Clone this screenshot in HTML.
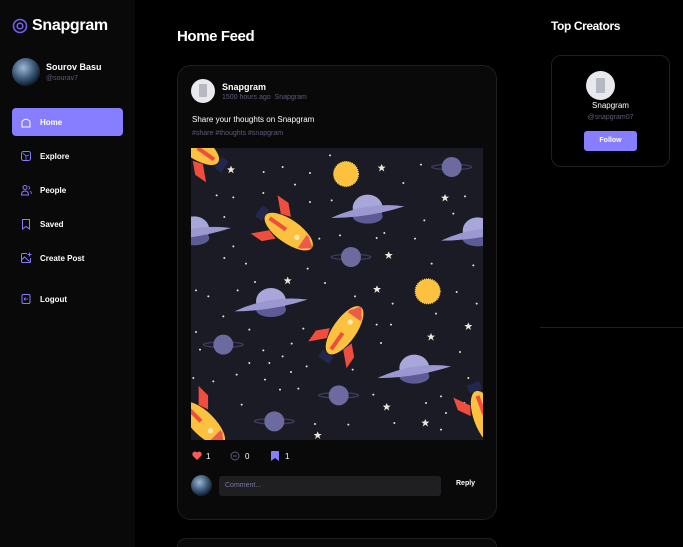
<!DOCTYPE html>
<html style="height:547px;overflow:hidden"><head><meta charset="utf-8"><style>
*{margin:0;padding:0;box-sizing:border-box}
body{width:683px;height:547px;background:#000;font-family:"Liberation Sans",sans-serif;color:#fff;position:relative;overflow:hidden}
.side{position:absolute;left:0;top:0;width:135px;height:547px;background:#09090a}
.logo{position:absolute;left:12px;top:17px;display:flex;align-items:center;gap:4px;font-size:16px;font-weight:bold}
.av{border-radius:50%;background:radial-gradient(circle at 40% 35%,#9fb7d3,#3c5878 45%,#0d1a2c 75%)}
.nav{position:absolute;left:12px;width:111px;height:28px;display:flex;align-items:center;font-size:8px;font-weight:bold;padding-left:28px}
.nav svg{position:absolute;left:8px;top:8px}
.card{position:absolute;left:177px;top:65px;width:320px;height:455px;background:#09090a;border:1px solid #1f1f22;border-radius:14px}
.rc{position:absolute;left:551px;top:55px;width:119px;height:112px;border:1px solid #1f1f22;border-radius:10px;background:#000}
</style></head><body>
<div class="side">
 <div class="logo"><svg width="16" height="16" viewBox="0 0 16 16"><circle cx="8" cy="8" r="6.5" fill="none" stroke="#6c63e8" stroke-width="1.6"/><circle cx="8" cy="8" r="2.8" fill="none" stroke="#6c63e8" stroke-width="1.6"/></svg><span style="letter-spacing:-.3px">Snapgram</span></div>
 <div class="av" style="position:absolute;left:12px;top:58px;width:28px;height:28px"></div>
 <div style="position:absolute;left:46px;top:62px;font-size:9px;font-weight:bold">Sourov Basu</div>
 <div style="position:absolute;left:46px;top:75px;font-size:7px;color:#5c5c7b">@sourav7</div>
 <div class="nav" style="top:108px;background:#877eff;border-radius:4px"><svg width="12" height="12" viewBox="0 0 12 12"><path d="M2 11V5.5Q6 1 10 5.5V11Z" fill="none" stroke="#fff" stroke-width="1"/></svg>Home</div>
 <div class="nav" style="top:142px"><svg width="12" height="12" viewBox="0 0 12 12"><rect x="1.5" y="1.5" width="9" height="9" rx="2" fill="none" stroke="#877eff"/><path d="M3 3l3 3l3-1M6 6v4" stroke="#877eff" fill="none" stroke-width=".8"/></svg>Explore</div>
 <div class="nav" style="top:176px"><svg width="12" height="12" viewBox="0 0 12 12"><circle cx="5" cy="3.5" r="2" fill="none" stroke="#877eff"/><path d="M1.5 11q0-4 3.5-4t3.5 4z" fill="none" stroke="#877eff"/><path d="M8.5 2a2 2 0 0 1 0 3.5M10 7q1.5 1 1.3 3" fill="none" stroke="#877eff" stroke-width=".8"/></svg>People</div>
 <div class="nav" style="top:210px"><svg width="12" height="12" viewBox="0 0 12 12"><path d="M2.5 1.5h7v9.5L6 8.5 2.5 11z" fill="none" stroke="#877eff"/></svg>Saved</div>
 <div class="nav" style="top:244px"><svg width="12" height="12" viewBox="0 0 12 12"><path d="M7 1.5H2.5a1 1 0 0 0-1 1v7a1 1 0 0 0 1 1h7a1 1 0 0 0 1-1V6M1.5 8l3-3 5 4.5" fill="none" stroke="#877eff"/><path d="M9.5 0.5v4M7.5 2.5h4" stroke="#877eff"/></svg>Create Post</div>
 <div class="nav" style="top:285px"><svg width="12" height="12" viewBox="0 0 12 12"><rect x="2" y="1.5" width="8" height="9" rx="1.5" fill="none" stroke="#877eff"/><path d="M4 6h4M4 6l1.5-1.5M4 6l1.5 1.5" stroke="#877eff" fill="none" stroke-width=".8"/></svg>Logout</div>
</div>

<div style="position:absolute;left:177px;top:28px;font-size:15px;font-weight:bold;letter-spacing:-.4px">Home Feed</div>
<div class="card">
 <div style="position:absolute;left:13px;top:13px;width:24px;height:24px;border-radius:50%;background:#e8e9ec"><div style="position:absolute;left:8px;top:5px;width:8px;height:13px;background:#b6b9c3;border-radius:1px"></div></div>
 <div style="position:absolute;left:44px;top:16px;font-size:9px;font-weight:bold">Snapgram</div>
 <div style="position:absolute;left:44px;top:28px;font-size:7px;color:#5c5c7b">1500 hours ago &nbsp;Snapgram</div>
 <div style="position:absolute;left:14px;top:49px;font-size:8px">Share your thoughts on Snapgram</div>
 <div style="position:absolute;left:14px;top:64px;font-size:7px;color:#5c5c7b">#share #thoughts #snapgram</div>
 <svg style="position:absolute;left:13px;top:82px" width="292" height="292" viewBox="0 0 876 876">
  <defs>
   <g id="u"><ellipse cx="0" cy="-10" rx="45" ry="40" fill="#a9a6d9"/><ellipse cx="0" cy="15" rx="45" ry="22" fill="#5d5a96"/><path d="M-110 20Q0 -30 110-15Q0 20-110 20z" fill="#9b98d1"/></g>
   <g id="p"><ellipse cx="0" cy="0" rx="60" ry="8" fill="none" stroke="#3d3c5e" stroke-width="4"/><circle r="30" fill="#6c6a9e"/></g>
   <g id="r"><path d="M-40-30l-40-40h40l30 30zM-40 30l-40 40h40l30-30z" fill="#ef4d3d"/><ellipse cx="10" cy="0" rx="85" ry="35" fill="#fcc13e"/><path d="M65-25Q100 0 65 25Q80 0 65-25z" fill="#ee5a4a"/><path d="M60-24Q95-5 95 0Q95 5 60 24z" fill="#ee5a4a"/><rect x="-60" y="-6" width="60" height="12" fill="#ef4d3d"/><circle cx="40" cy="0" r="8" fill="#fde6b0"/><rect x="-100" y="-20" width="25" height="40" fill="#23264d"/></g>
   <g id="s"><circle r="37" fill="#fcc13e" stroke="#ffd95a" stroke-width="4" stroke-dasharray="3 3"/></g>
   <path id="st" d="M0-12L3.5-4 12-4 5 2 8 11 0 5-8 11-5 2-12-4-3.5-4z" fill="#ece7d8"/>
  </defs>
  <rect width="876" height="876" fill="#1a1b24"/>
  <g fill="#e8e3d0">
   <circle cx="218" cy="72" r="3"/><circle cx="275" cy="57" r="3"/><circle cx="357" cy="75" r="3"/><circle cx="312" cy="110" r="3"/><circle cx="417" cy="22" r="3"/><circle cx="77" cy="142" r="3"/><circle cx="127" cy="148" r="3"/><circle cx="217" cy="135" r="3"/><circle cx="357" cy="162" r="3"/><circle cx="422" cy="157" r="3"/><circle cx="637" cy="105" r="3"/><circle cx="690" cy="50" r="3"/><circle cx="822" cy="145" r="3"/><circle cx="787" cy="197" r="3"/><circle cx="700" cy="217" r="3"/><circle cx="100" cy="207" r="3"/><circle cx="127" cy="295" r="3"/><circle cx="100" cy="330" r="3"/><circle cx="165" cy="347" r="3"/><circle cx="385" cy="272" r="3"/><circle cx="447" cy="262" r="3"/><circle cx="557" cy="270" r="3"/><circle cx="580" cy="255" r="3"/><circle cx="672" cy="272" r="3"/><circle cx="722" cy="347" r="3"/><circle cx="847" cy="352" r="3"/><circle cx="350" cy="362" r="3"/><circle cx="192" cy="402" r="3"/><circle cx="402" cy="405" r="3"/><circle cx="15" cy="427" r="3"/><circle cx="52" cy="445" r="3"/><circle cx="140" cy="427" r="3"/><circle cx="492" cy="445" r="3"/><circle cx="605" cy="467" r="3"/><circle cx="797" cy="432" r="3"/><circle cx="857" cy="467" r="3"/><circle cx="735" cy="497" r="3"/><circle cx="97" cy="505" r="3"/><circle cx="15" cy="552" r="3"/><circle cx="175" cy="545" r="3"/><circle cx="337" cy="542" r="3"/><circle cx="557" cy="530" r="3"/><circle cx="600" cy="530" r="3"/><circle cx="570" cy="585" r="3"/><circle cx="302" cy="587" r="3"/><circle cx="27" cy="605" r="3"/><circle cx="217" cy="607" r="3"/><circle cx="275" cy="625" r="3"/><circle cx="235" cy="645" r="3"/><circle cx="347" cy="655" r="3"/><circle cx="175" cy="645" r="3"/><circle cx="137" cy="680" r="3"/><circle cx="222" cy="695" r="3"/><circle cx="300" cy="672" r="3"/><circle cx="485" cy="665" r="3"/><circle cx="807" cy="612" r="3"/><circle cx="832" cy="690" r="3"/><circle cx="7" cy="690" r="3"/><circle cx="67" cy="700" r="3"/><circle cx="267" cy="725" r="3"/><circle cx="322" cy="722" r="3"/><circle cx="547" cy="740" r="3"/><circle cx="750" cy="745" r="3"/><circle cx="705" cy="765" r="3"/><circle cx="820" cy="765" r="3"/><circle cx="152" cy="770" r="3"/><circle cx="765" cy="795" r="3"/><circle cx="472" cy="830" r="3"/><circle cx="610" cy="825" r="3"/><circle cx="372" cy="828" r="3"/><circle cx="750" cy="845" r="3"/>
  </g>
  <use href="#st" x="120" y="65"/><use href="#st" x="572" y="60"/><use href="#st" x="762" y="150"/><use href="#st" x="593" y="322"/><use href="#st" x="290" y="398"/><use href="#st" x="558" y="424"/><use href="#st" x="832" y="535"/><use href="#st" x="720" y="567"/><use href="#st" x="587" y="777"/><use href="#st" x="703" y="825"/><use href="#st" x="380" y="862"/>
  <use href="#s" x="465" y="78"/><use href="#s" x="710" y="430"/>
  <use href="#p" x="480" y="327"/><use href="#p" x="782" y="57"/><use href="#p" x="97" y="590"/><use href="#p" x="443" y="742"/><use href="#p" x="250" y="820"/>
  <use href="#u" x="530" y="190"/><use href="#u" x="240" y="470"/><use href="#u" x="670" y="670"/><use href="#u" x="10" y="255"/><use href="#u" x="860" y="258"/>
  <use href="#r" transform="translate(285 245) rotate(35)"/>
  <use href="#r" transform="translate(455 555) rotate(-55)"/>
  <use href="#r" transform="translate(30 820) rotate(45)"/>
  <use href="#r" transform="translate(20 0) rotate(-145)"/>
  <use href="#r" transform="translate(880 800) rotate(70)"/>
 </svg>
 <svg style="position:absolute;left:14px;top:385px" width="10" height="9" viewBox="0 0 10 9"><path d="M5 9L1 5A2.4 2.4 0 0 1 5 1.5A2.4 2.4 0 0 1 9 5z" fill="#ff5a5a"/></svg>
 <div style="position:absolute;left:28px;top:386px;font-size:8px">1</div>
 <svg style="position:absolute;left:52px;top:385px" width="10" height="10"><circle cx="5" cy="5" r="4" fill="none" stroke="#5c5c7b"/><path d="M3 5h4" stroke="#5c5c7b"/></svg>
 <div style="position:absolute;left:67px;top:386px;font-size:8px">0</div>
 <svg style="position:absolute;left:93px;top:385px" width="8" height="10"><path d="M0 1q0-1 1-1h6q1 0 1 1v9L4 7 0 10z" fill="#877eff"/></svg>
 <div style="position:absolute;left:107px;top:386px;font-size:8px">1</div>
 <div class="av" style="position:absolute;left:13px;top:409px;width:21px;height:21px"></div>
 <div style="position:absolute;left:41px;top:410px;width:222px;height:20px;background:#1f1f22;border-radius:3px;font-size:7px;color:#7878a0;padding:6px 6px">Comment...</div>
 <div style="position:absolute;left:278px;top:414px;font-size:7px;font-weight:bold">Reply</div>
</div>
<div style="position:absolute;left:177px;top:538px;width:320px;height:9px;background:#09090a;border:1px solid #1f1f22;border-bottom:none;border-radius:14px 14px 0 0"></div>

<div style="position:absolute;left:551px;top:19px;font-size:12px;font-weight:bold;letter-spacing:-.4px">Top Creators</div>
<div class="rc">
 <div style="position:absolute;left:34px;top:15px;width:29px;height:29px;border-radius:50%;background:#e8e9ec"><div style="position:absolute;left:10px;top:7px;width:9px;height:15px;background:#b6b9c3;border-radius:1px"></div></div>
 <div style="position:absolute;left:0;width:117px;top:45px;text-align:center;font-size:8px">Snapgram</div>
 <div style="position:absolute;left:0;width:117px;top:58px;text-align:center;font-size:7px;color:#5c5c7b">@snapgram07</div>
 <div style="position:absolute;left:32px;top:75px;width:53px;height:20px;background:#877eff;border-radius:3px;font-size:7px;font-weight:bold;text-align:center;line-height:20px">Follow</div>
</div>
<div style="position:absolute;left:540px;top:327px;width:143px;height:1px;background:#1f1f22"></div>
</body></html>
